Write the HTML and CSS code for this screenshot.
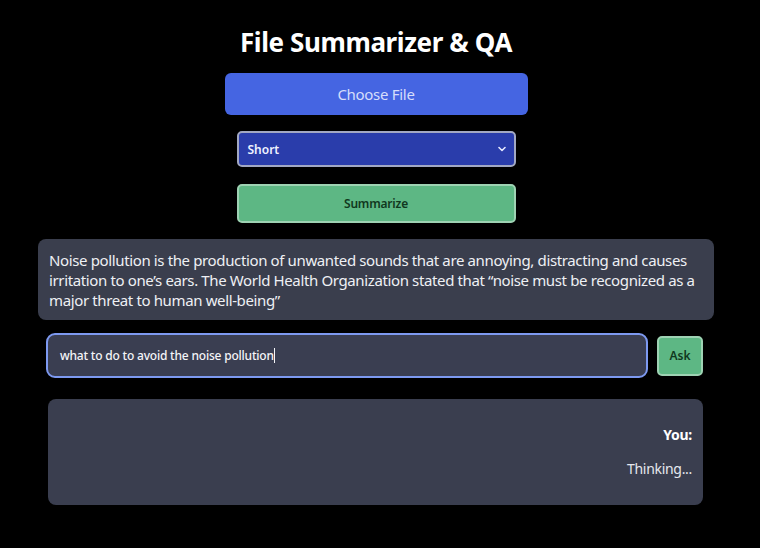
FILE: index.html
```html
<!DOCTYPE html>
<html>
<head>
<meta charset="utf-8">
<link rel="stylesheet" href="styles.css">
</head>
<body>
<div class="app">
  <h1 class="title">File Summarizer &amp; QA</h1>
  <button class="choose">Choose File</button>
  <div class="select">
    <span>Short</span>
    <svg class="chev" width="8" height="6" viewBox="0 0 8 6"><path d="M1 1.5 L4 4.5 L7 1.5" fill="none" stroke="#e6e9ff" stroke-width="1.6" stroke-linecap="round" stroke-linejoin="round"/></svg>
  </div>
  <button class="summarize">Summarize</button>
  <div class="summary">Noise pollution is the production of unwanted sounds that are annoying, distracting and causes irritation to one’s ears. The World Health Organization stated that “noise must be recognized as a major threat to human well-being”</div>
  <div class="ask-row">
    <div class="input"><span>what to do to avoid the noise pollution</span><span class="caret"></span></div>
    <button class="ask">Ask</button>
  </div>
  <div class="chat">
    <div class="you">You:</div>
    <div class="thinking">Thinking...</div>
  </div>
</div>
</body>
</html>
```
FILE: styles.css
```css
html, body {
  margin: 0;
  padding: 0;
  background: #000;
}
body {
  font-family: "Noto Sans", "Open Sans", sans-serif;
  color: #eef0f4;
}
.app {
  width: 676px;
  margin-left: 38px;
  display: flex;
  flex-direction: column;
  align-items: center;
  padding-top: 25px;
}
.title {
  margin: 0;
  font-size: 26px;
  font-weight: 700;
  line-height: 35px;
  color: #fff;
  letter-spacing: -0.4px;
}
button {
  font-family: inherit;
  border: none;
  cursor: pointer;
}
.choose {
  margin-top: 13px;
  width: 303px;
  height: 42px;
  background: #4565e2;
  border-radius: 6px;
  color: #d6ddfb;
  font-size: 15px;
  letter-spacing: -0.3px;
}
.select {
  margin-top: 16px;
  box-sizing: border-box;
  width: 279px;
  height: 36px;
  background: #2a3dab;
  border: 2px solid #a2a8c3;
  border-radius: 5px;
  display: flex;
  align-items: center;
  justify-content: space-between;
  padding: 0 8px 0 9px;
  font-size: 12px;
  font-weight: 600;
  color: #f0f2ff;
}
.summarize {
  margin-top: 17px;
  box-sizing: border-box;
  width: 279px;
  height: 39px;
  background: #5db784;
  border: 2px solid #9ed2b3;
  border-radius: 5px;
  color: #103820;
  font-size: 12px;
  font-weight: 600;
  letter-spacing: -0.2px;
}
.summary {
  margin-top: 16px;
  align-self: stretch;
  box-sizing: border-box;
  background: #3a3e4d;
  border-radius: 8px;
  padding: 11px 11px 10px 11px;
  font-size: 15px;
  line-height: 20px;
  letter-spacing: -0.37px;
  color: #eef0f4;
  height: 81px;
}
.ask-row {
  margin-top: 13px;
  align-self: stretch;
  display: flex;
  align-items: center;
  gap: 9px;
  padding-left: 8px;
}
.input {
  box-sizing: border-box;
  width: 602px;
  height: 45px;
  background: #3a3e51;
  border: 2px solid #7d99f0;
  border-radius: 9px;
  display: flex;
  align-items: center;
  padding-left: 12px;
  font-size: 12px;
  font-weight: 500;
  color: #f4f5f8;
  letter-spacing: -0.2px;
}
.caret {
  display: inline-block;
  width: 1px;
  height: 15px;
  background: #f4f5f8;
}
.ask {
  box-sizing: border-box;
  width: 46px;
  height: 40px;
  background: #5db784;
  border: 2px solid #9ed2b3;
  border-radius: 5px;
  color: #103820;
  font-size: 12px;
  font-weight: 600;
  padding: 0;
}
.chat {
  margin-top: 21px;
  margin-left: 10px;
  align-self: flex-start;
  box-sizing: border-box;
  width: 655px;
  height: 106px;
  background: #3a3e4f;
  border-radius: 8px;
  padding: 26px 11px 0 0;
  text-align: right;
  font-size: 14px;
  letter-spacing: -0.3px;
}
.you {
  font-weight: 700;
  color: #fff;
  line-height: 20px;
}
.thinking {
  margin-top: 14px;
  line-height: 20px;
  color: #e6e8ee;
}
```
